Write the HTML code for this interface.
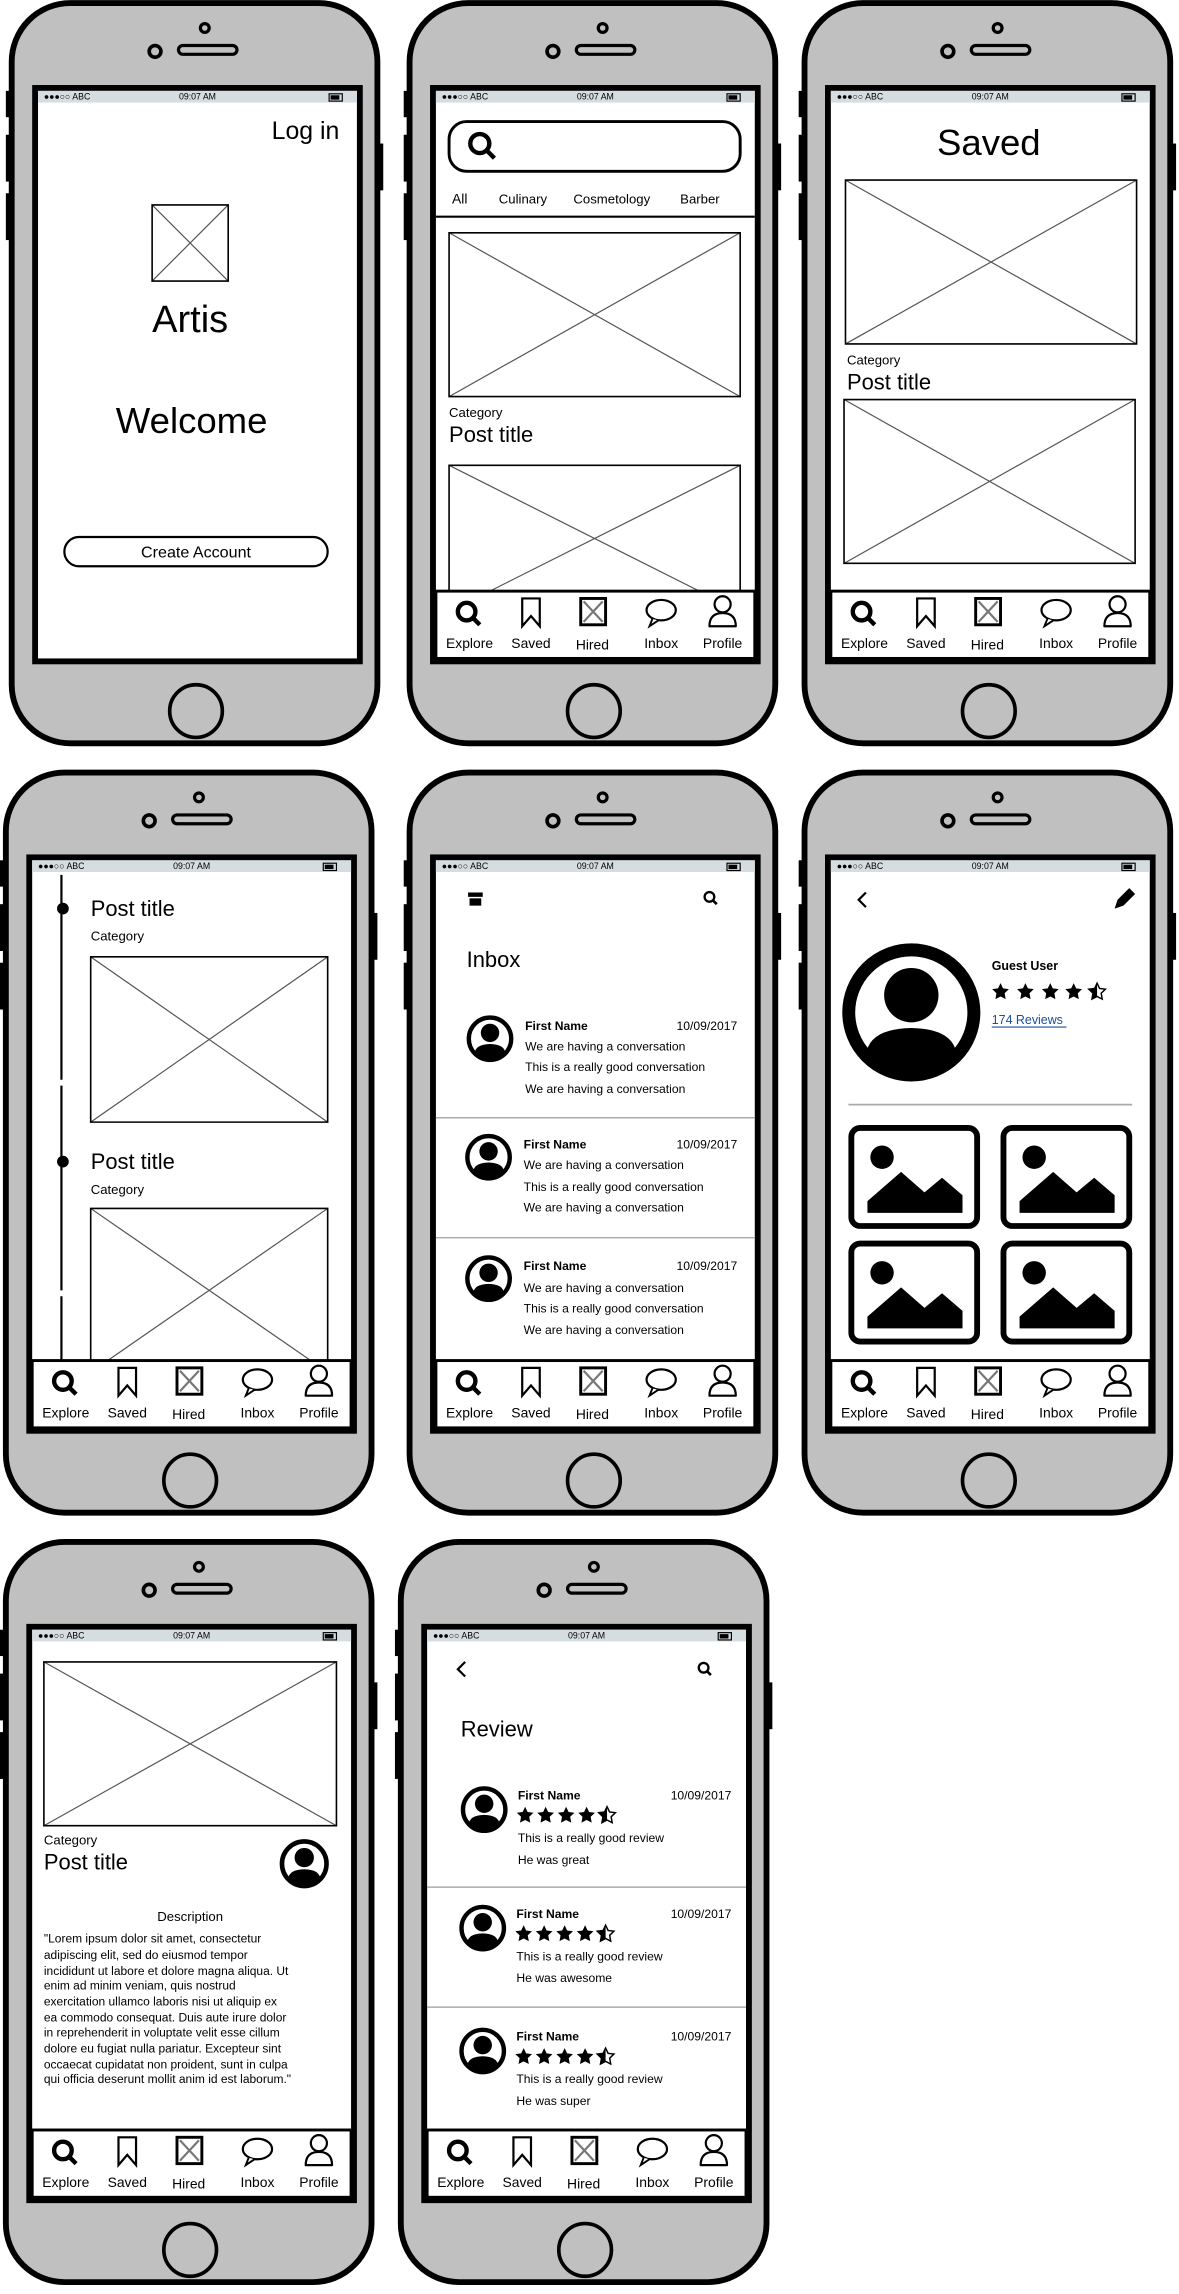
<!DOCTYPE html>
<html><head><meta charset="utf-8"><style>
html,body{margin:0;padding:0;background:#fff;}
svg{display:block;}
text{font-family:"Liberation Sans",sans-serif;fill:#000;}
</style></head><body>
<svg width="1179" height="2294" viewBox="0 0 806 1568" xmlns="http://www.w3.org/2000/svg">
<defs>
<symbol id="shell" overflow="visible">
<rect x="-2" y="62" width="5" height="18" fill="#000"/>
<rect x="-2" y="92" width="5" height="32" fill="#000"/>
<rect x="-2" y="132" width="5" height="32" fill="#000"/>
<rect x="251" y="98" width="5" height="32" fill="#000"/>
<rect x="2" y="2" width="250" height="506" rx="40" fill="#c0c0c0" stroke="#000" stroke-width="4"/>
<circle cx="100" cy="35" r="4" fill="none" stroke="#000" stroke-width="2.5"/>
<circle cx="134" cy="19" r="3" fill="none" stroke="#000" stroke-width="2.2"/>
<rect x="116" y="31" width="40" height="6" rx="3" fill="none" stroke="#000" stroke-width="2.2"/>
<rect x="18" y="60" width="222" height="392" fill="#fff" stroke="#000" stroke-width="4"/>
<rect x="20" y="62" width="218" height="8" fill="#d6dde0"/>
<rect x="219" y="64" width="9" height="5" fill="none" stroke="#000" stroke-width="0.8"/>
<rect x="220" y="65" width="6" height="3" fill="#000"/>
<circle cx="128" cy="486" r="18" fill="none" stroke="#000" stroke-width="2.5"/>
</symbol>
<symbol id="xb" viewBox="0 0 100 100" preserveAspectRatio="none" overflow="visible">
<line x1="0" y1="0" x2="100" y2="100" stroke="#555" stroke-width="1.2" vector-effect="non-scaling-stroke"/>
<line x1="100" y1="0" x2="0" y2="100" stroke="#555" stroke-width="1.2" vector-effect="non-scaling-stroke"/>
<rect x="0" y="0" width="100" height="100" fill="none" stroke="#000" stroke-width="1.6" vector-effect="non-scaling-stroke"/>
</symbol>
<symbol id="av" overflow="visible">
<circle cx="0" cy="0" r="14.5" fill="#fff" stroke="#000" stroke-width="3"/>
<circle cx="0" cy="-4" r="6.3" fill="#000"/>
<path d="M-10.5,10 Q-10,3.8 0,3.6 Q10,3.8 10.5,10 A13 13 0 0 1 -10.5 10 Z" fill="#000"/>
</symbol>
<symbol id="st" overflow="visible">
<polygon points="0,-6 1.7,-2.4 5.7,-1.9 2.8,0.9 3.5,4.9 0,3.1 -3.5,4.9 -2.8,0.9 -5.7,-1.9 -1.7,-2.4" fill="#000"/>
</symbol>
<symbol id="sth" overflow="visible">
<polygon points="0,-6 1.7,-2.4 5.7,-1.9 2.8,0.9 3.5,4.9 0,3.1 -3.5,4.9 -2.8,0.9 -5.7,-1.9 -1.7,-2.4" fill="#fff" stroke="#000" stroke-width="1"/>
<polygon points="0,-6 -1.7,-2.4 -5.7,-1.9 -2.8,0.9 -3.5,4.9 0,3.1" fill="#000"/>
</symbol>
<symbol id="tabs" overflow="visible">
<rect x="20" y="404" width="218" height="46" fill="#fff" stroke="#000" stroke-width="2"/>
<circle cx="41" cy="418" r="6" fill="none" stroke="#000" stroke-width="3"/>
<line x1="45" y1="422" x2="50" y2="427" stroke="#000" stroke-width="3"/>
<path d="M79,409 H91 V428 L85,421 L79,428 Z" fill="none" stroke="#000" stroke-width="1.5"/>
<rect x="119" y="409" width="17" height="18" fill="none" stroke="#000" stroke-width="2"/>
<path d="M121,411 L134,425 M134,411 L121,425" stroke="#777" stroke-width="1.5"/>
<ellipse cx="174" cy="417" rx="10" ry="7" fill="none" stroke="#000" stroke-width="1.5"/>
<path d="M168,423 L166,428 L172,424" fill="#fff" stroke="#000" stroke-width="1.3"/>
<circle cx="216" cy="413" r="5.5" fill="none" stroke="#000" stroke-width="1.5"/>
<path d="M207,428 Q207,419 216,419 Q225,419 225,428 Z" fill="none" stroke="#000" stroke-width="1.5" stroke-linejoin="round"/>
</symbol>
<symbol id="img" overflow="visible">
<rect x="0" y="0" width="86" height="67" rx="6" fill="#fff" stroke="#000" stroke-width="4"/>
<circle cx="21" cy="20" r="8" fill="#000"/>
<path d="M11,58 L11,50 L34,30 L50,44 L62,34 L76,46 L76,58 Z" fill="#000"/>
</symbol>
</defs>

<style>
.s{font-size:6px}.t{font-size:9.5px;text-anchor:middle}
</style>

<!-- P1 -->
<g transform="translate(6,0)">
<use href="#shell"/>
<text class="s" x="24" y="68">●●●○○ ABC</text><text class="s" x="129" y="68" text-anchor="middle">09:07 AM</text>
<text x="226" y="95" font-size="17" text-anchor="end">Log in</text>
<use href="#xb" x="98" y="140" width="52" height="52"/>
<text x="124" y="227" font-size="26" text-anchor="middle">Artis</text>
<text x="125" y="296" font-size="25" text-anchor="middle">Welcome</text>
<rect x="38" y="367" width="180" height="20" rx="10" fill="#fff" stroke="#000" stroke-width="1.5"/>
<text x="128" y="381" font-size="11" text-anchor="middle">Create Account</text>
</g>

<!-- P2 -->
<g transform="translate(278,0)">
<use href="#shell"/>
<text class="s" x="24" y="68">●●●○○ ABC</text><text class="s" x="129" y="68" text-anchor="middle">09:07 AM</text>
<rect x="29" y="83" width="199" height="34" rx="12" fill="#fff" stroke="#000" stroke-width="2"/>
<circle cx="50" cy="98" r="6.5" fill="none" stroke="#000" stroke-width="3"/>
<line x1="55" y1="103" x2="60" y2="108" stroke="#000" stroke-width="3"/>
<text x="31" y="139" font-size="9.5">All</text>
<text x="63" y="139" font-size="9">Culinary</text>
<text x="114" y="139" font-size="9">Cosmetology</text>
<text x="187" y="139" font-size="9">Barber</text>
<line x1="20" y1="148" x2="238" y2="148" stroke="#000" stroke-width="1.5"/>
<use href="#xb" x="29" y="159" width="199" height="112"/>
<text x="29" y="285" font-size="9">Category</text>
<text x="29" y="302" font-size="15">Post title</text>
<use href="#xb" x="29" y="318" width="199" height="100"/>
<use href="#tabs"/>
<text class="t" x="43" y="443">Explore</text><text class="t" x="85" y="443">Saved</text><text class="t" x="127" y="444">Hired</text><text class="t" x="174" y="443">Inbox</text><text class="t" x="216" y="443">Profile</text>
</g>

<!-- P3 -->
<g transform="translate(548,0)">
<use href="#shell"/>
<text class="s" x="24" y="68">●●●○○ ABC</text><text class="s" x="129" y="68" text-anchor="middle">09:07 AM</text>
<text x="128" y="106" font-size="25" text-anchor="middle">Saved</text>
<use href="#xb" x="30" y="123" width="199" height="112"/>
<text x="31" y="249" font-size="9">Category</text>
<text x="31" y="266" font-size="15">Post title</text>
<use href="#xb" x="29" y="273" width="199" height="112"/>
<use href="#tabs"/>
<text class="t" x="43" y="443">Explore</text><text class="t" x="85" y="443">Saved</text><text class="t" x="127" y="444">Hired</text><text class="t" x="174" y="443">Inbox</text><text class="t" x="216" y="443">Profile</text>
</g>

<!-- P4 -->
<g transform="translate(2,526)">
<use href="#shell"/>
<text class="s" x="24" y="68">●●●○○ ABC</text><text class="s" x="129" y="68" text-anchor="middle">09:07 AM</text>
<line x1="40" y1="72" x2="40" y2="404" stroke="#000" stroke-width="1.5" stroke-dasharray="140,4"/>
<circle cx="41" cy="95" r="4" fill="#000"/>
<circle cx="41" cy="268" r="4" fill="#000"/>
<text x="60" y="100" font-size="15">Post title</text>
<text x="60" y="117" font-size="9">Category</text>
<use href="#xb" x="60" y="128" width="162" height="113"/>
<text x="60" y="273" font-size="15">Post title</text>
<text x="60" y="290" font-size="9">Category</text>
<use href="#xb" x="60" y="300" width="162" height="112"/>
<use href="#tabs"/>
<text class="t" x="43" y="443">Explore</text><text class="t" x="85" y="443">Saved</text><text class="t" x="127" y="444">Hired</text><text class="t" x="174" y="443">Inbox</text><text class="t" x="216" y="443">Profile</text>
</g>

<!-- P5 -->
<g transform="translate(278,526)">
<use href="#shell"/>
<text class="s" x="24" y="68">●●●○○ ABC</text><text class="s" x="129" y="68" text-anchor="middle">09:07 AM</text>
<rect x="42" y="84" width="10" height="3" fill="#000"/><rect x="43" y="88" width="8" height="5" fill="#000"/>
<circle cx="207" cy="87" r="3.3" fill="none" stroke="#000" stroke-width="1.6"/><line x1="209.5" y1="89.5" x2="212" y2="92" stroke="#000" stroke-width="1.8"/>
<text x="41" y="135" font-size="15">Inbox</text>
<g font-size="8.3">
<use href="#av" x="57" y="184"/>
<text x="81" y="178" font-weight="bold">First Name</text><text x="226" y="178" text-anchor="end">10/09/2017</text>
<text x="81" y="192">We are having a conversation</text><text x="81" y="206">This is a really good conversation</text><text x="81" y="221">We are having a conversation</text>
<line x1="20" y1="238" x2="238" y2="238" stroke="#aaa" stroke-width="1"/>
<use href="#av" x="56" y="265"/>
<text x="80" y="259" font-weight="bold">First Name</text><text x="226" y="259" text-anchor="end">10/09/2017</text>
<text x="80" y="273">We are having a conversation</text><text x="80" y="288">This is a really good conversation</text><text x="80" y="302">We are having a conversation</text>
<line x1="20" y1="320" x2="238" y2="320" stroke="#aaa" stroke-width="1"/>
<use href="#av" x="56" y="348"/>
<text x="80" y="342" font-weight="bold">First Name</text><text x="226" y="342" text-anchor="end">10/09/2017</text>
<text x="80" y="357">We are having a conversation</text><text x="80" y="371">This is a really good conversation</text><text x="80" y="386">We are having a conversation</text>
</g>
<use href="#tabs"/>
<text class="t" x="43" y="443">Explore</text><text class="t" x="85" y="443">Saved</text><text class="t" x="127" y="444">Hired</text><text class="t" x="174" y="443">Inbox</text><text class="t" x="216" y="443">Profile</text>
</g>

<!-- P6 -->
<g transform="translate(548,526)">
<use href="#shell"/>
<text class="s" x="24" y="68">●●●○○ ABC</text><text class="s" x="129" y="68" text-anchor="middle">09:07 AM</text>
<path d="M44,84 L39,89 L44,94" fill="none" stroke="#000" stroke-width="1.5"/>
<path d="M214,95 L216,89 L224,81 L228,85 L220,93 Z" fill="#000"/>
<use href="#av" transform="translate(75,166) scale(2.95)"/>
<text x="130" y="137" font-size="8.5" font-weight="bold">Guest User</text>
<use href="#st" x="136" y="152"/><use href="#st" x="153" y="152"/><use href="#st" x="170" y="152"/><use href="#st" x="186" y="152"/><use href="#sth" x="202" y="152"/>
<text x="130" y="174" font-size="8.5" style="fill:#1a4f9c">174 Reviews</text>
<line x1="130" y1="176" x2="181" y2="176" stroke="#1a4f9c" stroke-width="0.8"/>
<line x1="32" y1="229" x2="226" y2="229" stroke="#aaa" stroke-width="1.2"/>
<use href="#img" x="34" y="245"/><use href="#img" x="138" y="245"/>
<use href="#img" x="34" y="324"/><use href="#img" x="138" y="324"/>
<use href="#tabs"/>
<text class="t" x="43" y="443">Explore</text><text class="t" x="85" y="443">Saved</text><text class="t" x="127" y="444">Hired</text><text class="t" x="174" y="443">Inbox</text><text class="t" x="216" y="443">Profile</text>
</g>

<!-- P7 -->
<g transform="translate(2,1052)">
<use href="#shell"/>
<text class="s" x="24" y="68">●●●○○ ABC</text><text class="s" x="129" y="68" text-anchor="middle">09:07 AM</text>
<use href="#xb" x="28" y="84" width="200" height="112"/>
<text x="28" y="209" font-size="9">Category</text>
<text x="28" y="226" font-size="15">Post title</text>
<use href="#av" transform="translate(206,222) scale(1.05)"/>
<text x="128" y="261" font-size="9" text-anchor="middle">Description</text>
<g font-size="8.2">
<text x="28" y="276">"Lorem ipsum dolor sit amet, consectetur</text>
<text x="28" y="287">adipiscing elit, sed do eiusmod tempor</text>
<text x="28" y="298">incididunt ut labore et dolore magna aliqua. Ut</text>
<text x="28" y="308">enim ad minim veniam, quis nostrud</text>
<text x="28" y="319">exercitation ullamco laboris nisi ut aliquip ex</text>
<text x="28" y="330">ea commodo consequat. Duis aute irure dolor</text>
<text x="28" y="340">in reprehenderit in voluptate velit esse cillum</text>
<text x="28" y="351">dolore eu fugiat nulla pariatur. Excepteur sint</text>
<text x="28" y="362">occaecat cupidatat non proident, sunt in culpa</text>
<text x="28" y="372">qui officia deserunt mollit anim id est laborum."</text>
</g>
<use href="#tabs"/>
<text class="t" x="43" y="443">Explore</text><text class="t" x="85" y="443">Saved</text><text class="t" x="127" y="444">Hired</text><text class="t" x="174" y="443">Inbox</text><text class="t" x="216" y="443">Profile</text>
</g>

<!-- P8 -->
<g transform="translate(272,1052)">
<use href="#shell"/>
<text class="s" x="24" y="68">●●●○○ ABC</text><text class="s" x="129" y="68" text-anchor="middle">09:07 AM</text>
<path d="M46,84 L41,89 L46,94" fill="none" stroke="#000" stroke-width="1.5"/>
<circle cx="209" cy="88" r="3.3" fill="none" stroke="#000" stroke-width="1.6"/><line x1="211.5" y1="90.5" x2="214" y2="93" stroke="#000" stroke-width="1.8"/>
<text x="43" y="135" font-size="15">Review</text>
<g font-size="8.3">
<use href="#av" x="59" y="185"/>
<text x="82" y="178" font-weight="bold">First Name</text><text x="228" y="178" text-anchor="end">10/09/2017</text>
<use href="#st" x="87" y="189"/><use href="#st" x="101" y="189"/><use href="#st" x="115" y="189"/><use href="#st" x="129" y="189"/><use href="#sth" x="143" y="189"/>
<text x="82" y="207">This is a really good review</text><text x="82" y="222">He was great</text>
<line x1="20" y1="238" x2="238" y2="238" stroke="#aaa" stroke-width="1"/>
<use href="#av" x="58" y="266"/>
<text x="81" y="259" font-weight="bold">First Name</text><text x="228" y="259" text-anchor="end">10/09/2017</text>
<use href="#st" x="86" y="270"/><use href="#st" x="100" y="270"/><use href="#st" x="114" y="270"/><use href="#st" x="128" y="270"/><use href="#sth" x="142" y="270"/>
<text x="81" y="288">This is a really good review</text><text x="81" y="303">He was awesome</text>
<line x1="20" y1="320" x2="238" y2="320" stroke="#aaa" stroke-width="1"/>
<use href="#av" x="58" y="350"/>
<text x="81" y="343" font-weight="bold">First Name</text><text x="228" y="343" text-anchor="end">10/09/2017</text>
<use href="#st" x="86" y="354"/><use href="#st" x="100" y="354"/><use href="#st" x="114" y="354"/><use href="#st" x="128" y="354"/><use href="#sth" x="142" y="354"/>
<text x="81" y="372">This is a really good review</text><text x="81" y="387">He was super</text>
</g>
<use href="#tabs"/>
<text class="t" x="43" y="443">Explore</text><text class="t" x="85" y="443">Saved</text><text class="t" x="127" y="444">Hired</text><text class="t" x="174" y="443">Inbox</text><text class="t" x="216" y="443">Profile</text>
</g>
</svg>
</body></html>
